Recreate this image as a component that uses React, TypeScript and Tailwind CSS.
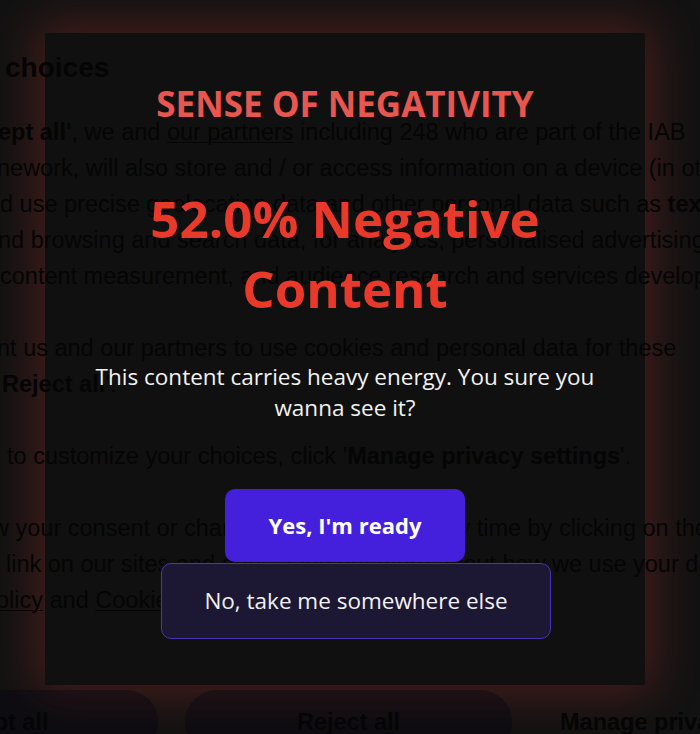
import React from "react";

const cookieFont = { fontFamily: '"Liberation Sans", Arial, sans-serif' };
const modalFont = { fontFamily: '"Open Sans", "Noto Sans", sans-serif' };

function CookiePage() {
  return (
    <div
      className="relative flex flex-col text-[23.5px] leading-[36px] text-[#050505] whitespace-nowrap"
      style={cookieFont}
    >
      <h2 className="mt-[50px] pl-[5px] text-[28px] font-bold leading-[36px]">
        choices
      </h2>
      <div className="mt-[28px] flex flex-col">
        <p className="-ml-[2px]">
          <b>ept all&apos;</b>, we and{" "}
          <span className="underline decoration-1 underline-offset-2">our partners</span> including 248 who are part of the IAB
        </p>
        <p className="-ml-[3px]">nework, will also store and / or access information on a device (in other words</p>
        <p>
          d use precise geolocation data and other personal data such as <b>text</b>
        </p>
        <p className="-ml-[2px]">nd browsing and search data, for analytics, personalised advertising</p>
        <p>content measurement, and audience research and services development.</p>
      </div>
      <div className="mt-[36px] flex flex-col">
        <p className="-ml-[3px]">nt us and our partners to use cookies and personal data for these</p>
        <p className="pl-[2px]">
          <b>Reject all</b>&apos;.
        </p>
      </div>
      <p className="mt-[36px] pl-[7px]">
        to customize your choices, click &apos;<b>Manage privacy settings</b>&apos;.
      </p>
      <div className="mt-[36px] flex flex-col">
        <p className="-ml-[8px]">w your consent or change your choices at any time by clicking on the</p>
        <p className="pl-[6px]">link on our sites and apps. Find out more about how we use your data</p>
        <p className="-ml-[4px]">
          <span className="underline decoration-1 underline-offset-2">olicy</span> and{" "}
          <span className="underline decoration-1 underline-offset-2">Cookie Policy</span>.
        </p>
      </div>
      <div className="mt-[72px] flex items-start font-bold">
        <div className="-ml-[172px] flex h-[64px] w-[330px] shrink-0 items-center justify-center rounded-full bg-[rgba(4,2,18,0.35)]">
          Accept all
        </div>
        <div className="ml-[27px] flex h-[64px] w-[327px] shrink-0 items-center justify-center rounded-full bg-[rgba(4,2,18,0.35)]">
          Reject all
        </div>
        <div className="flex h-[64px] shrink-0 items-center pl-[48px]">
          Manage privacy settings
        </div>
      </div>
    </div>
  );
}

export default function App() {
  return (
    <div className="relative h-[734px] w-[700px] overflow-hidden bg-[#121212]">
      {/* modal backdrop with red glow, the cookie page shows through over it */}
      <div className="absolute left-[45px] top-[33px] h-[652px] w-[600px] bg-[#101010] shadow-[0_0_45px_8px_rgba(200,60,50,0.3)]" />

      <CookiePage />

      <div
        className="absolute left-[45px] top-[33px] flex h-[652px] w-[600px] flex-col items-center px-[44px] pt-[51px] text-center"
        style={modalFont}
      >
        <h2 className="text-[35px] font-bold leading-[40px] text-[#e8574f]">
          SENSE OF NEGATIVITY
        </h2>
        <h1 className="mt-[59px] text-[51px] font-bold leading-[70px] text-[#e8392b]">
          52.0% Negative Content
        </h1>
        <p className="mt-[38px] text-[22.5px] leading-[31px] text-[#f2f2f2]">
          This content carries heavy energy. You sure you wanna see it?
        </p>
        <div className="mt-[66px] flex flex-col items-center">
          <button className="h-[73px] w-[240px] rounded-[10px] bg-[#4520dc] text-[22px] font-bold text-white">
            Yes, I&apos;m ready
          </button>
          <button className="ml-[22px] mt-[1px] h-[76px] w-[390px] rounded-[10px] border border-[#4a35b5] bg-[#1c1733] text-[22.5px] text-[#f2f2f2]">
            No, take me somewhere else
          </button>
        </div>
      </div>
    </div>
  );
}
